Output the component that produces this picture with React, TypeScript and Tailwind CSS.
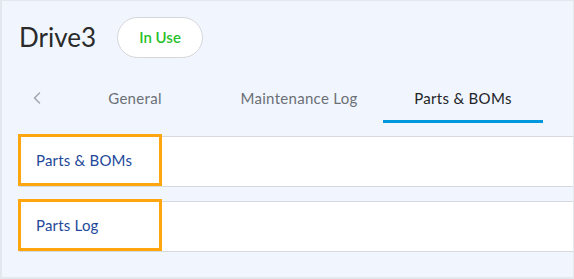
import React from "react";
import { ChevronLeft } from "lucide-react";

function Row({ label }: { label: string }) {
  return (
    <div className="relative h-[51px] ml-[17px] bg-white border-t border-b border-[#d6d9de]">
      <div className="absolute left-[-1px] top-[-3px] w-[144px] h-[52px] border-[3px] border-[#ffa50d] flex items-center pl-[15px]">
        <span className="text-[15px] text-[#23489a] tracking-[0.2px]">{label}</span>
      </div>
    </div>
  );
}

export default function App() {
  const tabs = ["General", "Maintenance Log", "Parts & BOMs"];
  return (
    <div
      className="w-[574px] h-[279px] bg-[#f1f6fe] border-t border-l-2 border-r border-b-2 border-[#e3e7ee] overflow-hidden"
      style={{ fontFamily: "Lato, 'Open Sans', sans-serif" }}
    >
      <div className="flex items-center h-[56px] pt-[16px] pl-[17px]">
        <h1 className="text-[26px] text-[#2a2a2a] leading-none">Drive3</h1>
        <div className="ml-[21px] w-[86px] h-[41px] rounded-full bg-white border border-[#d4d6da] flex items-center justify-center">
          <span className="text-[15px] font-semibold text-[#27c12a]">In Use</span>
        </div>
      </div>
      <div className="flex h-[77px] items-stretch mt-[2px]">
        <div className="w-[51px] flex items-end pl-[25px] pb-[28px]">
          <ChevronLeft size={20} className="text-[#a3a7ad]" strokeWidth={1.8} />
        </div>
        {tabs.map((t, i) => (
          <div key={t} className="w-[164px] flex flex-col items-center justify-end">
            <span className={"text-[15px] leading-none mb-[14px] tracking-[0.3px] " + (i === 2 ? "text-[#222428]" : "text-[#6b6f76]")}>{t}</span>
            <div className={"h-[3px] w-[160px] mb-[13px] " + (i === 2 ? "bg-[#0097dc]" : "bg-transparent")} />
          </div>
        ))}
      </div>
      <div className="flex flex-col gap-[14px]">
        <Row label="Parts & BOMs" />
        <Row label="Parts Log" />
      </div>
    </div>
  );
}
